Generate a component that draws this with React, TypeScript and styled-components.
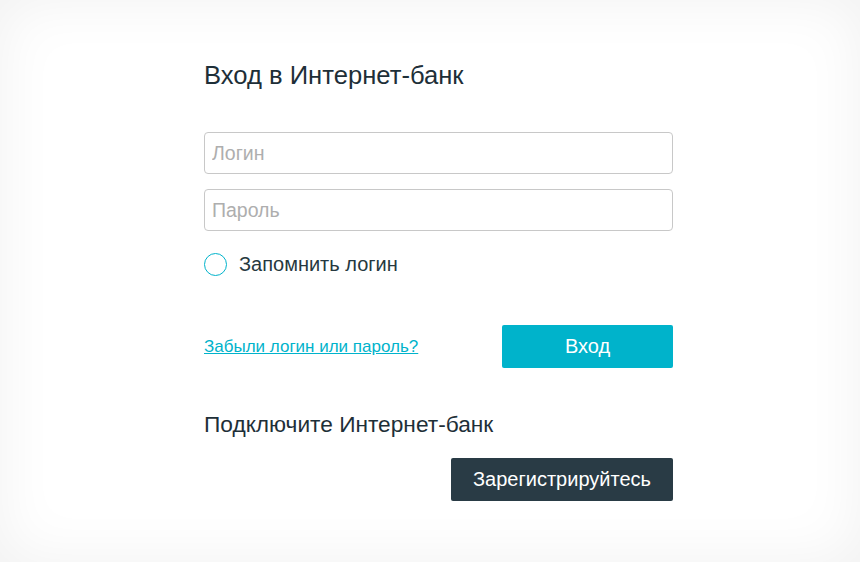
import React, { useState } from "react";
import styled, { createGlobalStyle } from "styled-components";

const GlobalStyle = createGlobalStyle`
    html, body {
        margin: 0;
        padding: 0;
        background: #ffffff;
    }
    * {
        box-sizing: border-box;
    }
`;

const Page = styled.div`
    width: 860px;
    height: 562px;
    background: #ffffff;
    box-shadow: inset 0 0 60px rgba(0, 0, 0, 0.06);
    font-family: "Liberation Sans", Arial, sans-serif;
    padding: 61px 0 0 204px;
`;

const Form = styled.form`
    width: 469px;
    display: flex;
    flex-direction: column;
`;

const Title = styled.h1`
    margin: 0 0 43px;
    font-size: 25.6px;
    line-height: 28px;
    font-weight: 400;
    color: #1e2f38;
`;

const Field = styled.input`
    height: 42px;
    width: 100%;
    border: 1px solid #c8c8c8;
    border-radius: 4px;
    padding: 0 7px;
    font-family: inherit;
    font-size: 19.5px;
    color: #333;
    outline: none;
    margin-bottom: 15px;

    &::placeholder {
        color: #aeaeae;
    }
`;

const Remember = styled.label`
    display: flex;
    align-items: center;
    gap: 12px;
    margin-top: 7px;
    cursor: pointer;
    font-size: 20px;
    color: #263840;
`;

const Circle = styled.span<{ $checked: boolean }>`
    width: 23px;
    height: 23px;
    border-radius: 50%;
    border: 1.5px solid #00b3cb;
    background: ${(p) => (p.$checked ? "#00b3cb" : "transparent")};
`;

const Actions = styled.div`
    display: flex;
    align-items: center;
    justify-content: space-between;
    margin-top: 49px;
`;

const ForgotLink = styled.a`
    font-size: 17px;
    color: #00b3cb;
    text-decoration: underline;
    cursor: pointer;
`;

const Button = styled.button<{ $dark?: boolean }>`
    height: 43px;
    border: none;
    border-radius: 2px;
    font-family: inherit;
    font-size: 20px;
    color: #ffffff;
    cursor: pointer;
    background: ${(p) => (p.$dark ? "#293b45" : "#00b3cb")};
    width: ${(p) => (p.$dark ? "222px" : "171px")};
`;

const Subtitle = styled.h2`
    margin: 43px 0 0;
    font-size: 22.7px;
    line-height: 26px;
    font-weight: 400;
    color: #1e2f38;
`;

const RegisterRow = styled.div`
    display: flex;
    justify-content: flex-end;
    margin-top: 21px;
`;

export default function App() {
    const [remember, setRemember] = useState(false);

    return (
        <>
            <GlobalStyle />
            <Page>
                <Form onSubmit={(e) => e.preventDefault()}>
                    <Title>Вход в Интернет-банк</Title>
                    <Field type="text" placeholder="Логин" />
                    <Field type="password" placeholder="Пароль" />
                    <Remember onClick={() => setRemember(!remember)}>
                        <Circle $checked={remember} />
                        Запомнить логин
                    </Remember>
                    <Actions>
                        <ForgotLink>Забыли логин или пароль?</ForgotLink>
                        <Button type="submit">Вход</Button>
                    </Actions>
                    <Subtitle>Подключите Интернет-банк</Subtitle>
                    <RegisterRow>
                        <Button type="button" $dark>
                            Зарегистрируйтесь
                        </Button>
                    </RegisterRow>
                </Form>
            </Page>
        </>
    );
}
